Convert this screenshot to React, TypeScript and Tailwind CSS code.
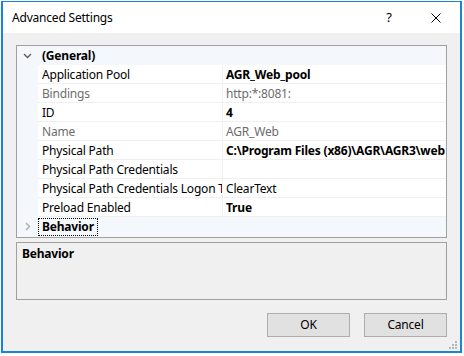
import type { ReactNode } from "react";

// Property rows shown under the (General) category
type Prop = {
  label: string;
  value: string;
  bold?: boolean;
  dim?: boolean;
};

const PROPS: Prop[] = [
  { label: "Application Pool", value: "AGR_Web_pool", bold: true },
  { label: "Bindings", value: "http:*:8081:", dim: true },
  { label: "ID", value: "4", bold: true },
  { label: "Name", value: "AGR_Web", dim: true },
  { label: "Physical Path", value: "C:\\Program Files (x86)\\AGR\\AGR3\\web", bold: true },
  { label: "Physical Path Credentials", value: "" },
  { label: "Physical Path Credentials Logon Type", value: "ClearText" },
  { label: "Preload Enabled", value: "True", bold: true },
];

const ChevronDown = () => (
  <svg width="9" height="6" viewBox="0 0 9 6" className="block">
    <path d="M1 1 L4.5 4.5 L8 1" fill="none" stroke="#5a5a5a" strokeWidth="1.3" />
  </svg>
);

const ChevronRight = () => (
  <svg width="6" height="9" viewBox="0 0 6 9" className="block">
    <path d="M1 1 L4.5 4.5 L1 8" fill="none" stroke="#a8a8a8" strokeWidth="1.3" />
  </svg>
);

const CategoryRow = ({ icon, children }: { icon: ReactNode; children: ReactNode }) => (
  <div className="flex h-[19px] bg-[#f4f7fc]">
    <div className="w-[21px] shrink-0 flex items-center justify-center">{icon}</div>
    <div className="flex-1 flex items-center font-bold">{children}</div>
  </div>
);

const PropRow = ({ p }: { p: Prop }) => (
  <div className="flex h-[19px]">
    <div className="w-[21px] shrink-0 bg-[#f4f7fc]" />
    <div className="flex flex-1 min-w-0 bg-white border-b border-[#f0f0f0]">
      <div
        className={`w-[184px] shrink-0 pl-[4px] pt-px flex items-center overflow-hidden whitespace-nowrap ${
          p.dim ? "text-[#6d6d6d]" : "text-black"
        }`}
      >
        {p.label}
      </div>
      <div
        className={`flex-1 min-w-0 border-l border-[#f0f0f0] pl-[3px] pt-px flex items-center overflow-hidden whitespace-nowrap ${
          p.bold ? "font-bold" : ""
        } ${p.dim ? "text-[#6d6d6d]" : "text-black"}`}
      >
        {p.value}
      </div>
    </div>
  </div>
);

export default function App() {
  return (
    <div className="w-[464px] h-[356px] bg-white pt-px pl-px font-['Noto_Sans','DejaVu_Sans',sans-serif] text-[12px] tracking-[-0.2px] leading-none text-black">
      <div className="w-[461px] h-[352px] flex flex-col bg-[#f0f0f0] border-[#1883d7] border-t border-l-2 border-r-2 border-b-2">
        {/* title bar */}
        <div className="h-[31px] bg-white flex items-center pl-[9px] shrink-0">
          <span className="flex-1 text-[12px]">Advanced Settings</span>
          <span className="w-[10px] text-center mr-[37px] text-[13px]">?</span>
          <svg width="10" height="10" viewBox="0 0 10 10" className="mr-[19px]">
            <path d="M0.5 0.5 L9.5 9.5 M9.5 0.5 L0.5 9.5" stroke="#000" strokeWidth="1" />
          </svg>
        </div>

        {/* property grid */}
        <div className="mt-[12px] mx-[13px] h-[193px] border border-[#a0a0a0] bg-[#f4f7fc] overflow-hidden">
          <CategoryRow icon={<ChevronDown />}>
            <span className="pl-[4px] pt-px">(General)</span>
          </CategoryRow>
          {PROPS.map((p) => (
            <PropRow key={p.label} p={p} />
          ))}
          <CategoryRow icon={<ChevronRight />}>
            <span className="h-[18px] px-[3px] pt-px flex items-center border border-dotted border-black">
              Behavior
            </span>
          </CategoryRow>
        </div>

        {/* description pane */}
        <div className="mt-[4px] mx-[13px] h-[58px] border border-[#a0a0a0] pl-[5px] pt-[5px] font-bold">
          Behavior
        </div>

        {/* buttons */}
        <div className="flex justify-end gap-[14px] mt-[13px] mr-[13px]">
          <button className="w-[83px] h-[24px] bg-[#e1e1e1] border border-[#adadad] text-[12px]">
            OK
          </button>
          <button className="w-[83px] h-[24px] bg-[#e1e1e1] border border-[#adadad] text-[12px]">
            Cancel
          </button>
        </div>

        {/* resize grip */}
        <div className="flex-1 flex items-end justify-end pr-[3px] pb-[2px]">
          <svg width="8" height="8" viewBox="0 0 8 8">
            <rect x="6" y="0" width="2" height="2" fill="#b8b8b8" />
            <rect x="3" y="3" width="2" height="2" fill="#b8b8b8" />
            <rect x="6" y="3" width="2" height="2" fill="#b8b8b8" />
            <rect x="0" y="6" width="2" height="2" fill="#b8b8b8" />
            <rect x="3" y="6" width="2" height="2" fill="#b8b8b8" />
            <rect x="6" y="6" width="2" height="2" fill="#b8b8b8" />
          </svg>
        </div>
      </div>
    </div>
  );
}
